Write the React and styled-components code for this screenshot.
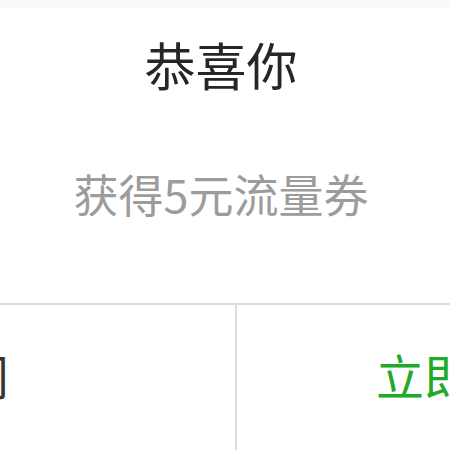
import styled, { createGlobalStyle } from "styled-components";

const GlobalStyle = createGlobalStyle`
  html, body {
    margin: 0;
    padding: 0;
    background: #ffffff;
    overflow: hidden;
  }
  body {
    font-family: "Noto Sans CJK SC", "Noto Sans", sans-serif;
  }
`;

export default function App() {
  return (
    <>
      <GlobalStyle />
      <DialogStyled>
        <DialogHeaderStyled>
          <DialogTitleStyled>恭喜你</DialogTitleStyled>
        </DialogHeaderStyled>
        <DialogBodyStyled>获得5元流量券</DialogBodyStyled>
        <DialogFooterStyled>
          <DialogButtonStyled side="left">关闭</DialogButtonStyled>
          <DialogButtonStyled side="right" primary>
            立即使用
          </DialogButtonStyled>
        </DialogFooterStyled>
      </DialogStyled>
    </>
  );
}

const DialogStyled = styled.div`
  display: flex;
  flex-direction: column;
  width: 450px;
  height: 450px;
  background: #ffffff;
  border-top: 8px solid #f9f9f9;
  box-sizing: border-box;
  overflow: hidden;
`;

const DialogHeaderStyled = styled.div`
  padding: 26px 8px 0 0;
  text-align: center;
`;

const DialogTitleStyled = styled.h1`
  margin: 0;
  font-size: 51px;
  font-weight: 400;
  line-height: 60px;
  color: #262626;
`;

const DialogBodyStyled = styled.p`
  margin: 70px 8px 0 0;
  font-size: 45px;
  line-height: 60px;
  text-align: center;
  color: #9c9c9c;
`;

const DialogFooterStyled = styled.div`
  display: flex;
  flex: 1;
  margin-top: 79px;
  border-top: 2px solid #dcdcdc;
`;

const DialogButtonStyled = styled.a`
  display: flex;
  align-items: center;
  flex: ${(p) => (p.side === "left" ? "0 0 237px" : "1")};
  justify-content: ${(p) => (p.side === "left" ? "flex-end" : "flex-start")};
  padding: ${(p) => (p.side === "left" ? "0 226px 8px 0" : "0 0 8px 139px")};
  box-sizing: border-box;
  border-right: ${(p) => (p.side === "left" ? "2px solid #dcdcdc" : "none")};
  font-size: 48px;
  line-height: 60px;
  white-space: nowrap;
  overflow: hidden;
  color: ${(p) => (p.primary ? "#22a925" : "#353535")};
`;
